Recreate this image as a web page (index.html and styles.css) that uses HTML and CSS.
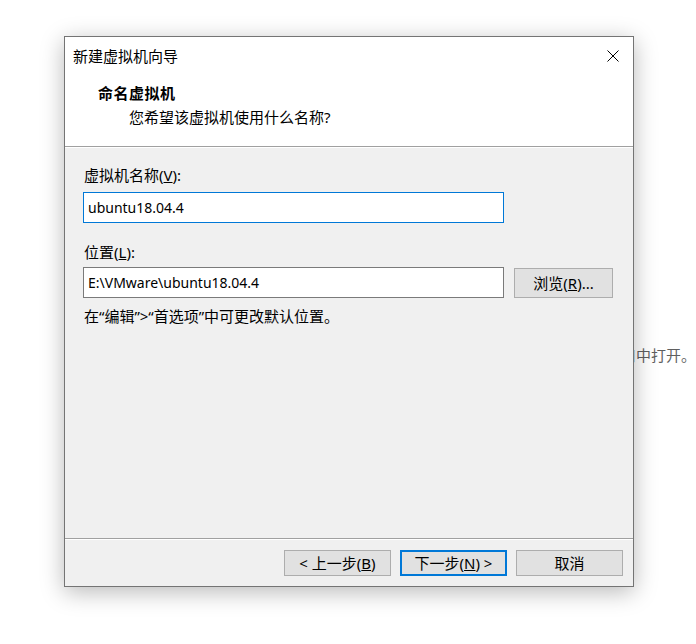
FILE: index.html
```html
<!DOCTYPE html>
<html lang="zh-CN">
<head>
<meta charset="utf-8">
<title>新建虚拟机向导</title>
<link rel="stylesheet" href="styles.css">
</head>
<body>
<div class="bg-text">在新窗口中打开。</div>
<div class="dialog">
  <div class="top">
    <div class="titlebar">
      <span class="title">新建虚拟机向导</span>
      <svg class="close" width="12" height="12" viewBox="0 0 12 12"><path d="M0.5 0.5 L11.5 11.5 M11.5 0.5 L0.5 11.5" stroke="#000" stroke-width="1" fill="none"/></svg>
    </div>
    <div class="header">
      <div class="heading">命名虚拟机</div>
      <div class="sub">您希望该虚拟机使用什么名称?</div>
    </div>
  </div>
  <div class="content">
    <div class="label first">虚拟机名称(<u>V</u>):</div>
    <div class="field focused">ubuntu18.04.4</div>
    <div class="label second">位置(<u>L</u>):</div>
    <div class="row">
      <div class="field">E:\VMware\ubuntu18.04.4</div>
      <div class="btn browse">浏览(<u>R</u>)...</div>
    </div>
    <div class="note">在“编辑”&gt;“首选项”中可更改默认位置。</div>
  </div>
  <div class="footer">
    <div class="btn">&lt; 上一步(<u>B</u>)</div>
    <div class="btn default">下一步(<u>N</u>) &gt;</div>
    <div class="btn">取消</div>
  </div>
</div>
</body>
</html>
```
FILE: styles.css
```css
html, body {
  margin: 0;
  padding: 0;
  background: #fff;
}
body {
  position: relative;
  width: 696px;
  height: 644px;
  overflow: hidden;
  font-family: "Noto Sans", "Noto Sans CJK SC", sans-serif;
  font-size: 15px;
  line-height: 20px;
  color: #000;
}
.bg-text {
  position: absolute;
  left: 576px;
  top: 345px;
  color: #5f5f5f;
  white-space: nowrap;
}
.dialog {
  position: relative;
  z-index: 1;
  margin: 36px 0 0 64px;
  width: 568px;
  height: 549px;
  border: 1px solid #747474;
  background: #f0f0f0;
  display: flex;
  flex-direction: column;
  box-shadow: 0 5px 22px rgba(0, 0, 0, 0.28);
}
.top {
  background: #fff;
  border-bottom: 1px solid #a0a0a0;
}
.titlebar {
  height: 37px;
  display: flex;
  align-items: center;
  justify-content: space-between;
  padding: 0 14px 0 8px;
}
.close {
  display: block;
}
.header {
  padding: 9px 0 19px 33px;
}
.heading {
  font-weight: bold;
  letter-spacing: 0.5px;
}
.sub {
  margin-top: 4px;
  padding-left: 31px;
}
.content {
  flex: 1;
  border-top: 1px solid #fff;
  padding: 17px 0 0 18px;
}
.label {
  padding-left: 1px;
}
.field {
  box-sizing: border-box;
  width: 421px;
  height: 31px;
  border: 1px solid #7a7a7a;
  background: #fff;
  padding: 0 4px;
  display: flex;
  align-items: center;
  font-size: 14px;
}
.field.focused {
  margin-top: 7px;
  border-color: #0078d7;
}
.label.second {
  margin-top: 19px;
}
.row {
  margin-top: 5px;
  display: flex;
  align-items: center;
  gap: 10px;
}
.btn {
  box-sizing: border-box;
  width: 107px;
  height: 26px;
  border: 1px solid #adadad;
  background: #e1e1e1;
  display: flex;
  align-items: center;
  justify-content: center;
  white-space: nowrap;
}
.btn.browse {
  width: 99px;
  height: 30px;
}
.btn.default {
  border: 2px solid #0078d7;
}
.note {
  margin-top: 8px;
  padding-left: 1px;
}
.footer {
  height: 48px;
  box-sizing: border-box;
  border-top: 1px solid #a0a0a0;
  box-shadow: inset 0 1px 0 #fff;
  display: flex;
  justify-content: flex-end;
  align-items: flex-start;
  gap: 9px;
  padding: 11px 10px 0 0;
}
```
